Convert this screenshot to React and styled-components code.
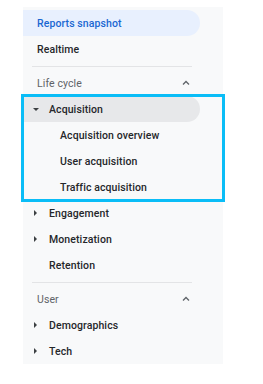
import React from "react";
import styled, { createGlobalStyle } from "styled-components";

const Global = createGlobalStyle`
  body {
    margin: 0;
    background: #ffffff;
    font-family: Roboto, "Liberation Sans", Arial, sans-serif;
  }
`;

const Panel = styled.nav`
  margin: 7px 0 0 23px;
  width: 200px;
  height: 357px;
  padding-top: 3px;
  box-sizing: border-box;
  background: #f8f9fa;
  display: flex;
  flex-direction: column;
`;

const Row = styled.div`
  height: 26px;
  width: 177px;
  display: flex;
  align-items: center;
  box-sizing: border-box;
  padding-left: ${(p) => p.$indent}px;
  border-radius: 0 13px 13px 0;
  font-size: 10.5px;
  font-weight: 500;
  letter-spacing: 0.1px;
  color: ${(p) => (p.$active ? "#1a67d2" : "#25272a")};
  background: ${(p) =>
    p.$active ? "#e8f0fe" : p.$selected ? "#e7e8ea" : "transparent"};
`;

const Arrow = styled.span`
  width: 16px;
  display: flex;
  align-items: center;
  justify-content: flex-start;
  padding-left: 1px;
  &::before {
    content: "";
    display: block;
    width: 0;
    height: 0;
    ${(p) =>
      p.$open
        ? `border-left: 3px solid transparent;
           border-right: 3px solid transparent;
           border-top: 3px solid #3c4043;`
        : `border-top: 3px solid transparent;
           border-bottom: 3px solid transparent;
           border-left: 3px solid #3c4043;
           margin-left: 1px;`}
  }
`;

const Divider = styled.hr`
  border: none;
  border-top: 1px solid #e3e4e6;
  margin: 4px 0 3px 9px;
  width: 160px;
`;

const Header = styled.div`
  height: 26px;
  width: 177px;
  display: flex;
  align-items: center;
  justify-content: space-between;
  padding: 0 10px 0 14px;
  box-sizing: border-box;
  font-size: 10.5px;
  color: #5f6368;
  letter-spacing: 0.1px;
`;

const Group = styled.div`
  display: flex;
  flex-direction: column;
  outline: 3px solid #0abdf7;
  outline-offset: -1px;
`;

const Caret = () => (
  <svg width="8" height="6" viewBox="0 0 8 6">
    <path d="M1 4.5 L4 1.5 L7 4.5" fill="none" stroke="#5f6368" strokeWidth="1.3" />
  </svg>
);

const Expandable = ({ label, open, selected }) => (
  <Row $indent={9} $selected={selected}>
    <Arrow $open={open} />
    {label}
  </Row>
);

export default function App() {
  return (
    <>
      <Global />
      <Panel>
        <Row $indent={14} $active>Reports snapshot</Row>
        <Row $indent={14}>Realtime</Row>
        <Divider />
        <Header>
          Life cycle
          <Caret />
        </Header>
        <Group>
          <Expandable label="Acquisition" open selected />
          <Row $indent={37}>Acquisition overview</Row>
          <Row $indent={37}>User acquisition</Row>
          <Row $indent={37}>Traffic acquisition</Row>
        </Group>
        <Expandable label="Engagement" />
        <Expandable label="Monetization" />
        <Row $indent={26}>Retention</Row>
        <Divider />
        <Header>
          User
          <Caret />
        </Header>
        <Expandable label="Demographics" />
        <Expandable label="Tech" />
      </Panel>
    </>
  );
}
